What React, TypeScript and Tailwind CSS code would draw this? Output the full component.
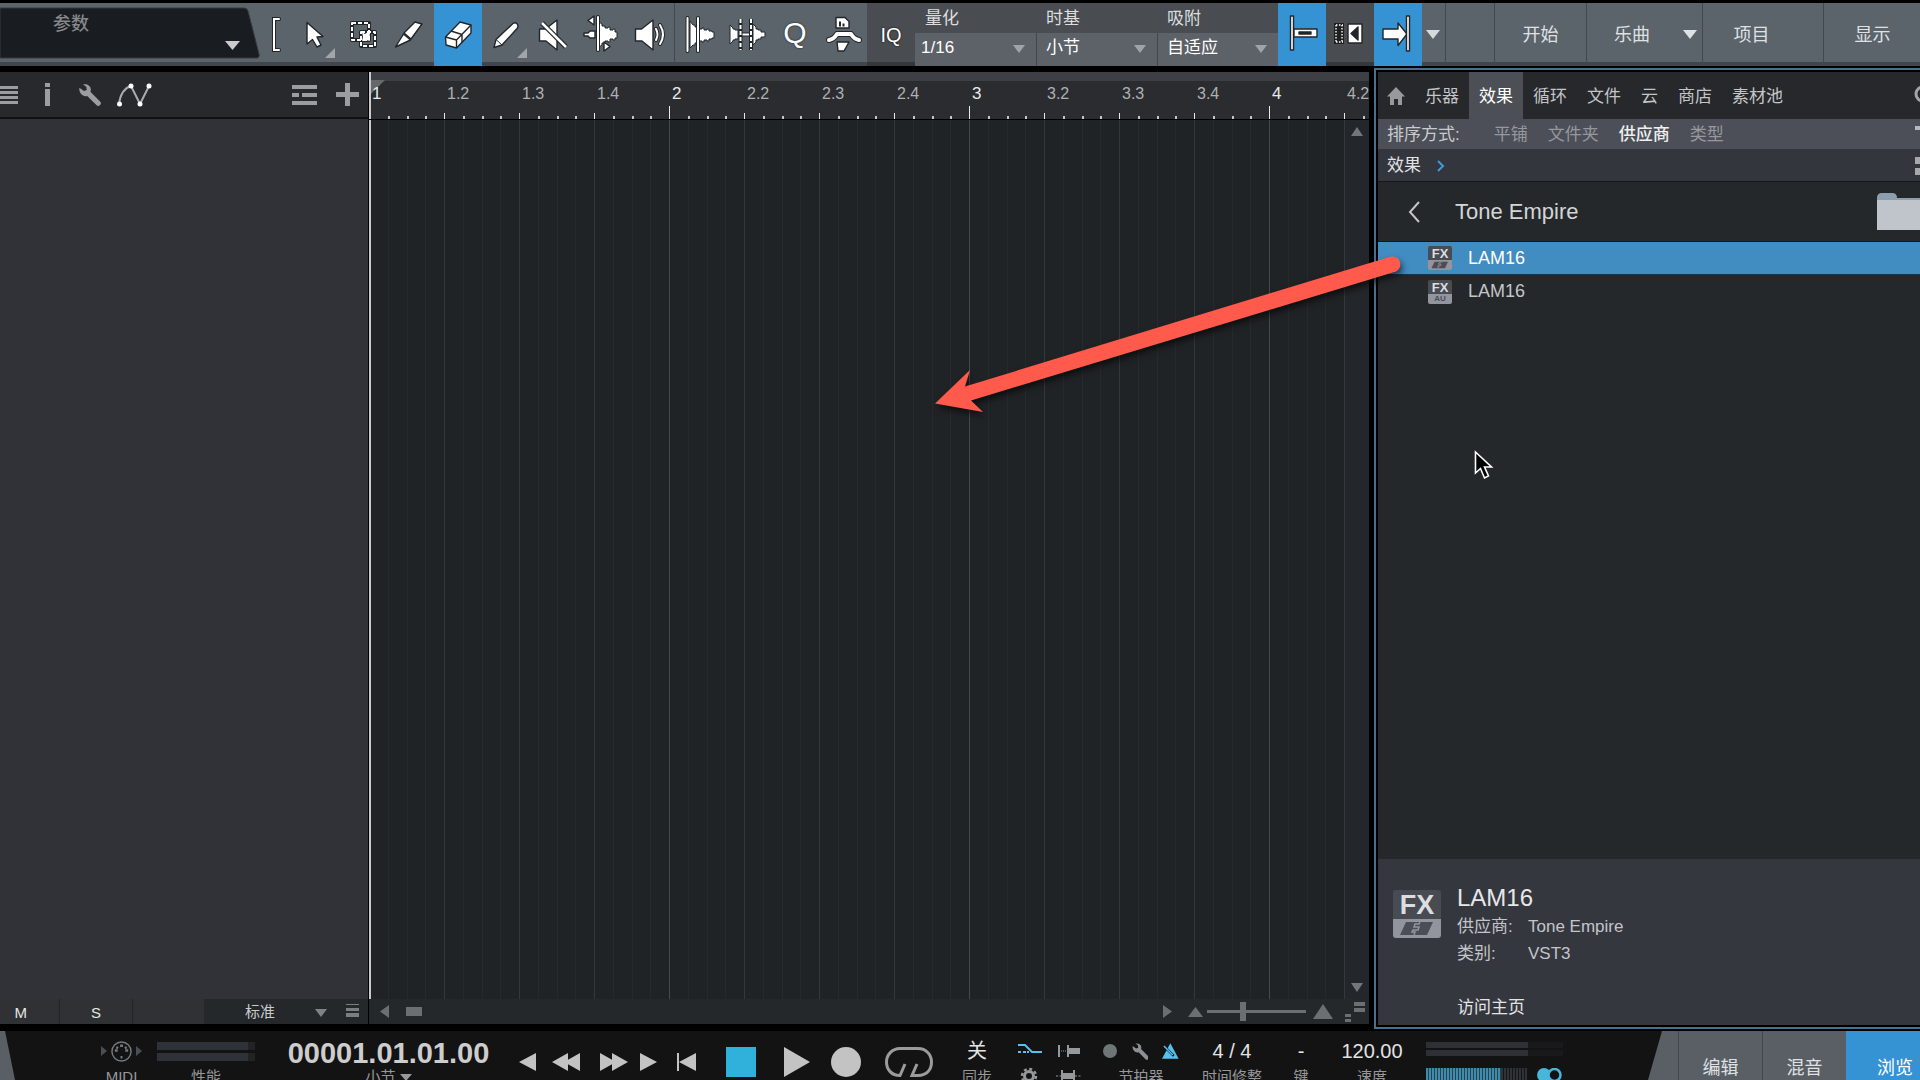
import { clsx } from "clsx";
import type { ReactNode } from "react";

const BARS = [1, 2, 3, 4];
const TICKS = Array.from({ length: 16 }, (_, i) => i);

/* ---------- small shapes ---------- */

function Triangle({
	dir,
	className,
}: {
	dir: "up" | "down" | "left" | "right";
	className?: string;
}) {
	const points = {
		up: "0,10 5,0 10,10",
		down: "0,0 10,0 5,10",
		left: "10,0 10,10 0,5",
		right: "0,0 10,5 0,10",
	}[dir];
	return (
		<svg
			viewBox="0 0 10 10"
			preserveAspectRatio="none"
			className={clsx("shrink-0 fill-current", className)}
			aria-hidden="true"
		>
			<polygon points={points} />
		</svg>
	);
}

function Wrench({ className }: { className?: string }) {
	return (
		<svg viewBox="0 0 24 24" className={className} aria-hidden="true">
			<path
				d="M1 4l5 3.500 3-1L8.500 3 5 .500C10-.500 15 3 13 8.500L23.500 19a2.600 2.600 0 0 1-4 4L9.500 13C5 14.500 0 10 1 4z"
				fill="currentColor"
			/>
		</svg>
	);
}

function FxBadge({ kind, large }: { kind: "vst" | "au"; large?: boolean }) {
	return (
		<span
			className={clsx(
				"flex shrink-0 flex-col overflow-hidden text-center font-bold",
				large ? "h-12 w-12 rounded-[3px]" : "h-6 w-6 rounded-[2px]",
			)}
		>
			<span
				className={clsx(
					"bg-[#484b52] text-[#dcdde0]",
					large ? "h-[29px] text-[27px] leading-[30px]" : "h-[14px] text-[13px] leading-[15px]",
				)}
			>
				FX
			</span>
			<span className="flex flex-1 items-center justify-center bg-[#92959d] text-[8px] leading-[9px] text-[#4b4e56]">
				{kind === "au" ? (
					"AU"
				) : (
					<svg viewBox="0 0 48 19" className="h-full w-full" fill="none" aria-hidden="true">
						<path d="M13 3h27l-6 13H7z" fill="#4b4e56" />
						<path d="M27 3l-1 2h-4l-1 3h5l-1 3h-5l-1 2h3l-1 3" stroke="#92959d" strokeWidth="1.500" />
					</svg>
				)}
			</span>
		</span>
	);
}

/* ---------- toolbar ---------- */

function Tool({
	label,
	active,
	corner,
	children,
}: {
	label: string;
	active?: boolean;
	corner?: boolean;
	children: ReactNode;
}) {
	return (
		<button
			type="button"
			aria-label={label}
			aria-pressed={active}
			className={clsx("h-full w-12 shrink-0", active && "bg-[#3593d4]")}
		>
			<svg
				viewBox="0 0 48 63"
				className="h-full w-12"
				fill="#fff"
				stroke="#22262a"
				strokeWidth="1.4"
				strokeLinejoin="round"
			>
				{children}
				{corner && <polygon points="45,45 45,55 35,55" fill="#a2a5a9" stroke="none" />}
			</svg>
		</button>
	);
}

function OutlinedLine({ d, width = 3 }: { d: string; width?: number }) {
	return (
		<>
			<path d={d} fill="none" strokeWidth={width + 2} strokeLinecap="round" />
			<path d={d} fill="none" stroke="#fff" strokeWidth={width} strokeLinecap="round" />
		</>
	);
}

function EditTools() {
	return (
		<div className="flex shrink-0">
			<Tool label="箭头工具" corner>
				<path d="M17 19.500V41l5.500-4.500L27 44l4-2-4-8 6-.500z" />
			</Tool>
			<Tool label="范围工具">
				<rect x="14" y="20" width="17" height="17" fill="none" strokeWidth="4" />
				<rect x="23" y="29" width="14" height="14" fill="none" strokeWidth="4" />
				<rect x="14" y="20" width="17" height="17" fill="none" stroke="#fff" strokeWidth="2" strokeDasharray="4 2" />
				<rect x="23" y="29" width="14" height="14" fill="none" stroke="#fff" strokeWidth="2" strokeDasharray="4 2" />
				<path d="M24 29l3 2 3-2 2 3-1 2 1 4-4-1-4 1 1-4z" stroke="none" />
			</Tool>
			<Tool label="分割工具">
				<path d="M9.500 44l8-13 7 6z" />
				<path d="M18 30l11-11 7 2-11 15z" />
			</Tool>
			<Tool label="橡皮擦工具" active>
				<path d="M11.500 34L26 19l11 3v8L22.500 45 12 42z" />
				<path d="M11.500 34l11 3L37 22M22.500 37v8M17 28l11 3.500v8" fill="none" />
			</Tool>
			<Tool label="绘画工具" corner>
				<path d="M12 44.500l2-8L31 20.500c3-2 6 1 4.500 4.500L20 42z" />
				<path d="M14 36.500l6 5.500" fill="none" strokeWidth="1" />
			</Tool>
			<Tool label="静音工具">
				<path d="M9.500 26h6L27 17v30l-11-9H9.500z" />
				<path d="M12 20l24 24" strokeWidth="5" />
				<path d="M12 20l24 24" stroke="#fff" strokeWidth="2.500" />
			</Tool>
			<Tool label="折弯工具">
				<path d="M6 30h4l2-2h5v7h-5l-2-2H6z" />
				<path d="M21 19l3 2v2h3v2h3v-1h2v3h3v-1h2v3h2v6h-2v2h-2v-1h-3v3h-2v-1h-3v2h-3v2l-3 2z" strokeWidth="1" />
				<path d="M16 13v9l-6-4.500zM26 39v9l6-4.500z" />
				<OutlinedLine d="M20 14v33" width={2} />
			</Tool>
			<Tool label="试听工具">
				<path d="M9.500 26h6L27 17v30l-11-9H9.500z" />
				<OutlinedLine d="M30 26q3 5.500 0 11M34 22q6 9.500 0 19" width={2} />
			</Tool>
		</div>
	);
}

function AudioTools() {
	return (
		<div className="flex shrink-0 border-l border-[#43484e]">
			<Tool label="瞬态检测">
				<path
					d="M15 18l3 4h2v2h4v2h3v-1h2v2h3v-1h2v2h3v1h2v6h-2v1h-3v2h-2v-1h-3v2h-2v-1h-3v2h-4v2h-2l-3 3z"
					strokeWidth="1"
				/>
				<OutlinedLine d="M12.500 15v33M23 15v33" width={2} />
			</Tool>
			<Tool label="去除静音">
				<path d="M7 22l3 3v1h2v1h3v9h-3v1h-2v1l-3 3zM30 21l3 3v2h2v1h3v2h4v5h-4v2h-3v1h-2v2l-3 3z" strokeWidth="1" />
				<path d="M17 31.500h11" strokeWidth="4" />
				<path d="M17 31.500h11" stroke="#fff" strokeWidth="2" />
				<path d="M17.500 16v31M28 16v31" strokeWidth="4" />
				<path d="M17.500 16v31M28 16v31" stroke="#fff" strokeWidth="2" strokeDasharray="4 2" />
			</Tool>
			<button
				type="button"
				aria-label="量化"
				className="w-12 shrink-0 pb-1 text-[30px] text-white [text-shadow:0_0_2px_#111]"
			>
				Q
			</button>
			<Tool label="应用">
				<path d="M17 14.500h9l4 4V25H17z" />
				<path d="M21 23.500v-5M24.500 23.500v-3" strokeWidth="2" />
				<OutlinedLine d="M10 37q5-1 8-6h14q3 5 8 6" width={4} />
				<path d="M18 39h12l-5 9h-6z" />
			</Tool>
		</div>
	);
}

function ToolbarSelect({
	id,
	label,
	value,
	divider,
}: {
	id: string;
	label: string;
	value: string;
	divider?: boolean;
}) {
	return (
		<div className="flex w-[121px] shrink-0 flex-col text-[17px] leading-5 text-[#dcdee0]">
			<label htmlFor={id} className="flex h-[30px] items-center pt-[2px] pl-[10px]">
				{label}
			</label>
			<div className={clsx("relative flex-1 bg-[#5d6269]", divider && "border-l border-[#43474c]")}>
				<select
					id={id}
					className={clsx(
						"h-[30px] w-full appearance-none bg-transparent text-white outline-none",
						divider ? "pl-[9px]" : "pl-[6px]",
					)}
				>
					<option>{value}</option>
				</select>
				<Triangle dir="down" className="pointer-events-none absolute right-[11px] top-3 h-2 w-3 text-[#a0a3a7]" />
			</div>
		</div>
	);
}

function Toolbar() {
	return (
		<header className="flex h-[63px] shrink-0 bg-[#5c646b] shadow-[inset_0_-4px_0_#40464c]">
			<button
				type="button"
				className="relative h-[56px] w-[260px] shrink-0 text-left text-[18px] font-medium text-[#86888b]"
			>
				<svg
					viewBox="0 0 260 56"
					preserveAspectRatio="none"
					className="absolute inset-0 h-full w-full"
					aria-hidden="true"
				>
					<path d="M0 5h244q3 0 4 3l11 43q1 4-3 4H0z" fill="#191c21" stroke="#363b40" />
				</svg>
				<span className="absolute left-[53px] top-2">参数</span>
				<Triangle dir="down" className="absolute bottom-[9px] right-5 h-[9px] w-[15px] text-[#c9cbcd]" />
			</button>
			<svg viewBox="0 0 30 63" className="w-[30px] shrink-0" stroke="#22262a" aria-hidden="true">
				<OutlinedLine d="M19 16h-5v31h5" width={2} />
			</svg>
			<EditTools />
			<AudioTools />
			<div className="flex shrink-0 bg-[#494d51] shadow-[inset_0_-4px_0_#34383b]">
				<button type="button" className="w-12 text-[20px] font-medium text-white [text-shadow:0_0_2px_#000]">
					IQ
				</button>
				<ToolbarSelect id="quantize" label="量化" value="1/16" />
				<ToolbarSelect id="timebase" label="时基" value="小节" divider />
				<ToolbarSelect id="snap" label="吸附" value="自适应" divider />
				<Tool label="吸附开关" active>
					<path d="M12.500 13h3v34h-3z" />
					<path d="M16 26h23v8H16z" />
					<path d="M21 29h12v2H21z" fill="#22262a" />
				</Tool>
				<Tool label="自动滚动">
					<path d="M8 20h10v21H8z" fill="#1d1f21" stroke="none" />
					<path d="M10 22h7M10 39h7M10 22v18M16 22v18" stroke="#fff" strokeDasharray="1.500 1.500" />
					<path d="M22 21h14v19H22z" />
					<path d="M32 24v13l-7-6.500z" fill="#22262a" />
				</Tool>
				<Tool label="返回起点" active>
					<path d="M9 26h15v-6l9 11-9 11.500V36H9z" />
					<path d="M32.500 13h3v35h-3z" />
				</Tool>
			</div>
			<button
				type="button"
				aria-label="更多"
				className="flex w-6 shrink-0 items-center border-r border-[#43484e] pl-1 text-[#d7d9db]"
			>
				<Triangle dir="down" className="h-[9px] w-[14px]" />
			</button>
			<nav className="flex shrink-0 text-[18px] text-[#dfe1e3]">
				<span className="w-[49px] border-r border-[#43484e]" />
				<button type="button" className="w-[92px] border-r border-[#43484e] pt-[2px]">
					开始
				</button>
				<button type="button" className="w-[90px] pt-[2px]">
					乐曲
				</button>
				<button
					type="button"
					aria-label="乐曲列表"
					className="flex w-[26px] items-center justify-center border-r border-[#43484e]"
				>
					<Triangle dir="down" className="h-[9px] w-[14px]" />
				</button>
				<button type="button" className="w-[97px] pt-[2px]">
					项目
				</button>
				<span className="w-6 border-r border-[#43484e]" />
				<button type="button" className="w-[97px] pt-[2px]">
					显示
				</button>
			</nav>
		</header>
	);
}

/* ---------- track list ---------- */

function TrackList() {
	return (
		<section className="flex w-[369px] shrink-0 flex-col border-r border-black bg-[#303237]">
			<div className="flex h-[47px] shrink-0 items-center border-b-2 border-[#101113] bg-[#27292c] text-[#9b9d9f]">
				<button type="button" aria-label="轨道列表" className="flex w-[18px] flex-col gap-[2px]">
					<span className="h-[3px] bg-current" />
					<span className="h-[3px] bg-current" />
					<span className="h-[3px] bg-current" />
					<span className="h-[3px] bg-current" />
				</button>
				<button type="button" aria-label="检查器" className="ml-[27px] flex w-[5px] flex-col gap-[2px]">
					<span className="h-1 bg-current" />
					<span className="h-[17px] bg-current" />
				</button>
				<button type="button" aria-label="设置" className="ml-7">
					<Wrench className="h-[22px] w-[23px]" />
				</button>
				<button type="button" aria-label="自动化" className="ml-4">
					<svg viewBox="0 0 36 24" className="h-6 w-9">
						<path
							d="M2 21Q4 6 14 3M14 3l9 18L32 3"
							fill="none"
							stroke="#a9abad"
							strokeWidth="2"
						/>
						<g fill="#fff">
							<circle cx="2.500" cy="21" r="2.500" />
							<circle cx="14" cy="3" r="2.500" />
							<circle cx="23" cy="21" r="2.500" />
							<circle cx="32" cy="3" r="2.500" />
						</g>
					</svg>
				</button>
				<button type="button" aria-label="展开层" className="ml-auto">
					<svg viewBox="0 0 25 20" className="h-5 w-[25px] fill-current">
						<path d="M0 0h25v4H0zM0 8h7v4H0zM10 8h15v4H10zM0 16h25v4H0z" />
					</svg>
				</button>
				<button type="button" aria-label="添加轨道" className="ml-[19px] mr-[9px]">
					<svg viewBox="0 0 23 23" className="h-[23px] w-[23px] fill-current">
						<path d="M9 0h5v9h9v5h-9v9H9v-9H0V9h9z" />
					</svg>
				</button>
			</div>
			<div className="flex-1" />
			<div className="flex h-[25px] shrink-0 bg-[#25282b] text-[15px] leading-[26px] text-[#e4e5e6]">
				<button type="button" className="w-[60px] border-r border-[#232426] bg-[#303134] pt-[1px] pr-8 text-right">
					M
				</button>
				<button type="button" className="w-[73px] border-r border-[#232426] bg-[#303134] pt-[1px]">
					S
				</button>
				<span className="w-[71px] bg-[#303134]" />
				<div className="relative flex-1">
					<select
						aria-label="轨道高度"
						className="h-[26px] w-[130px] appearance-none bg-transparent pl-[41px] text-[#c9cbcd] outline-none"
					>
						<option>标准</option>
					</select>
					<Triangle dir="down" className="pointer-events-none absolute left-[111px] top-[10px] h-2 w-3 text-[#808386]" />
				</div>
				<svg viewBox="0 0 13 14" className="mr-[9px] mt-[5px] h-[14px] w-[13px] fill-[#7b7e81]" aria-hidden="true">
					<path d="M0 0h13v1H0zM0 4h13v3H0zM0 9h13v4H0z" />
				</svg>
			</div>
		</section>
	);
}

/* ---------- arranger ---------- */

function RulerBar({ bar }: { bar: number }) {
	// the last bar runs out of view after its second beat
	const visible = bar === BARS.length ? 6 : 16;
	return (
		<div className="grid h-full w-[300px] shrink-0 grid-cols-16 items-end">
			{TICKS.slice(0, visible).map((i) => (
				<div
					key={i}
					className={clsx(
						"relative",
						i % 4 === 0 ? "border-l border-[#e8e9ea]" : "border-l-2 border-[#c4c5c6]",
						i === 0 ? "h-[13px]" : i % 4 === 0 ? "h-[6px]" : "h-[3px]",
					)}
				>
					{i % 4 === 0 && (
						<span
							className={clsx(
								"absolute bottom-[15px] left-[2px] leading-5",
								i === 0 ? "text-[17px] text-[#e8e9ea]" : "text-[16px] text-[#aeb0b2]",
								i === 0 ? "mb-[-13px]" : i % 4 === 0 ? "mb-[-6px]" : "",
								i === 0 ? "pb-[13px]" : "pb-[6px]",
							)}
						>
							{i === 0 ? bar : `${bar}.${i / 4 + 1}`}
						</span>
					)}
				</div>
			))}
		</div>
	);
}

function GridBar() {
	return (
		<div className="grid h-full w-[300px] shrink-0 grid-cols-16">
			{TICKS.map((i) => (
				<div
					key={i}
					className={clsx(
						"border-l",
						i === 0 ? "border-[#45484c]" : i % 4 === 0 ? "border-[#34373b]" : "border-[#272a2d]",
					)}
				/>
			))}
		</div>
	);
}

function Arranger() {
	return (
		<section className="relative flex min-w-0 flex-1 flex-col bg-[#202326]">
			<div className="relative h-12 shrink-0 overflow-hidden border-b border-black bg-[#2b2c30]">
				<div className="h-[9px] bg-[#3d3f44]" />
				<svg viewBox="0 0 14 14" className="absolute left-[2px] top-2 h-[14px] w-[14px]" aria-hidden="true">
					<polygon points="0,0 14,0 0,14" fill="#66686c" />
				</svg>
				<div className="absolute inset-0 flex">
					{BARS.map((bar) => (
						<RulerBar key={bar} bar={bar} />
					))}
				</div>
				<span className="absolute inset-y-0 left-0 w-[2px] bg-[#c8c9ca]" />
			</div>
			<div className="flex min-h-0 flex-1">
				<div className="flex min-w-0 flex-1 overflow-hidden border-l-2 border-[#c8c9ca]">
					<div className="-ml-[2px] flex">
						{BARS.map((bar) => (
							<GridBar key={bar} />
						))}
					</div>
				</div>
				<div className="flex w-6 flex-col items-center justify-between bg-[#23262a] py-[7px] text-[#74777a]">
					<Triangle dir="up" className="h-[9px] w-3" />
					<Triangle dir="down" className="h-[9px] w-3" />
				</div>
			</div>
			<div className="flex h-[25px] shrink-0 items-center bg-[#25282b] text-[#6c6f72]">
				<Triangle dir="left" className="ml-[11px] h-[13px] w-[9px]" />
				<span className="ml-[17px] h-[9px] w-4 bg-current" />
				<Triangle dir="right" className="ml-auto h-[13px] w-[9px]" />
				<Triangle dir="up" className="ml-4 h-[10px] w-[15px]" />
				<input
					type="range"
					aria-label="水平缩放"
					defaultValue={35}
					className="ml-1 mr-[7px] h-5 w-[99px] appearance-none bg-transparent [&::-webkit-slider-runnable-track]:h-[3px] [&::-webkit-slider-runnable-track]:bg-[#6c6f72] [&::-webkit-slider-thumb]:-mt-2 [&::-webkit-slider-thumb]:h-[19px] [&::-webkit-slider-thumb]:w-[6px] [&::-webkit-slider-thumb]:appearance-none [&::-webkit-slider-thumb]:bg-[#6c6f72]"
				/>
				<Triangle dir="up" className="h-[15px] w-5" />
				<svg viewBox="0 0 20 20" className="ml-3 mr-1 h-5 w-5 fill-current" aria-hidden="true">
					<path d="M9 0h11v4H9zM9 6h11v4H9zM0 12h6v3H0zM0 17h6v3H0z" />
				</svg>
			</div>
		</section>
	);
}

/* ---------- browser ---------- */

const TABS = ["乐器", "效果", "循环", "文件", "云", "商店", "素材池"];
const SORTS = ["平铺", "文件夹", "供应商", "类型"];

function BrowserPanel() {
	return (
		<aside className="flex w-[551px] shrink-0 flex-col border-l-[5px] border-black">
			<div className="-mt-1 mb-[-5px] flex min-h-0 flex-1 flex-col border-2 border-r-0 border-[#47718c] bg-black py-[2px] pl-[2px]">
				<nav className="flex h-[47px] shrink-0 items-stretch bg-[#26282b] text-[17px] text-[#c3c5c7]">
					<button type="button" aria-label="主页" className="ml-[9px] mr-[10px]">
						<svg viewBox="0 0 18 18" className="h-[18px] w-[18px] fill-[#97999b]">
							<path d="M9 0l9 9.500h-3V18h-4v-6H7v6H3V9.500H0z" />
						</svg>
					</button>
					{TABS.map((tab) => (
						<button
							key={tab}
							type="button"
							className={clsx("px-[10px] pt-[2px]", tab === "效果" && "bg-[#4c4f56] text-white")}
						>
							{tab}
						</button>
					))}
					<button type="button" aria-label="搜索" className="-mr-4 ml-auto">
						<svg viewBox="0 0 22 22" className="h-[22px] w-[22px]" fill="none" stroke="#a2a4a6" strokeWidth="3">
							<circle cx="9" cy="9" r="7" />
							<path d="M14 14l7 7" />
						</svg>
					</button>
				</nav>
				<div className="flex h-[30px] shrink-0 items-center gap-5 overflow-hidden bg-[#4c4f57] pt-[1px] pl-[9px] text-[17px] leading-5 text-[#96989d]">
					<span className="mr-[14px] text-[#c9cbce]">排序方式:</span>
					{SORTS.map((sort) => (
						<button
							key={sort}
							type="button"
							className={clsx(sort === "供应商" && "font-medium text-[#eeeff0]")}
						>
							{sort}
						</button>
					))}
					<span className="ml-auto mt-[6px] h-1 w-[5px] self-start bg-[#b5b7ba]" />
				</div>
				<div className="flex h-8 shrink-0 items-center gap-4 bg-[#34363d] pt-[1px] pl-[9px] text-[17px] text-[#e2e3e5]">
					<button type="button">效果</button>
					<svg viewBox="0 0 8 12" className="h-3 w-2" fill="none" stroke="#3d9bd8" strokeWidth="2" aria-hidden="true">
						<path d="M1 1l5 5-5 5" />
					</svg>
					<span className="ml-auto flex w-[5px] flex-col gap-1">
						<span className="h-[7px] bg-[#a6a8ab]" />
						<span className="h-[7px] bg-[#a6a8ab]" />
					</span>
				</div>
				<div className="flex h-[61px] shrink-0 items-center border-y border-[#15171a] bg-[#25282b]">
					<button type="button" aria-label="返回" className="ml-[30px]">
						<svg viewBox="0 0 12 22" className="h-[22px] w-3" fill="none" stroke="#c3c5c7" strokeWidth="2">
							<path d="M11 1L2 11l9 10" />
						</svg>
					</button>
					<h2 className="ml-[35px] text-[22px] font-light text-[#d3d5d7]">Tone Empire</h2>
					<svg viewBox="0 0 43 37" className="ml-auto h-[37px] w-[43px]" aria-hidden="true">
						<path d="M0 5q0-5 5-5h10q5 0 5 5h23v8H0z" fill="#8f9eae" />
						<path d="M0 7h43v30H0z" fill="#bfc5ca" />
					</svg>
				</div>
				<ul className="min-h-0 flex-1 bg-[#25282b] text-[18px] text-[#c3c5c7]">
					<li className="flex h-[33px] items-center gap-4 border-b border-[#1a3345] bg-[#418cc0] pl-[50px] text-white">
						<FxBadge kind="vst" />
						LAM16
					</li>
					<li className="flex h-[33px] items-center gap-4 pl-[50px]">
						<FxBadge kind="au" />
						LAM16
					</li>
				</ul>
				<div className="flex h-[166px] shrink-0 gap-4 bg-[#35373f] pl-[15px] pt-[31px] text-[17px] text-[#c3c5c9]">
					<FxBadge kind="vst" large />
					<div className="-mt-2">
						<h3 className="text-[24px] leading-[31px] font-light text-[#e6e7e9]">LAM16</h3>
						<dl className="grid grid-cols-[71px_auto] leading-[27px]">
							<dt>供应商:</dt>
							<dd>Tone Empire</dd>
							<dt>类别:</dt>
							<dd>VST3</dd>
						</dl>
						<a href="#home" className="mt-[27px] block leading-[27px] text-[#e2e3e5]">
							访问主页
						</a>
					</div>
				</div>
			</div>
		</aside>
	);
}

/* ---------- transport ---------- */

function Readout({
	value,
	label,
	className,
	children,
}: {
	value?: string;
	label: string;
	className?: string;
	children?: ReactNode;
}) {
	return (
		<div className={clsx("flex shrink-0 flex-col items-center", className)}>
			<div className="flex h-10 w-full shrink-0 items-center justify-center text-[20px] whitespace-nowrap text-[#e2e3e4]">
				{value ?? children}
			</div>
			<span className="-mt-1 shrink-0 text-[15px] leading-5 whitespace-nowrap text-[#96989a]">{label}</span>
		</div>
	);
}

function TransportButtons() {
	return (
		<div className="flex h-[48px] shrink-0 items-center pt-[14px] text-[#c3c3c3]">
			<button type="button" aria-label="上一标记" className="w-[17px]">
				<Triangle dir="left" className="h-[18px] w-[17px]" />
			</button>
			<button type="button" aria-label="快退" className="ml-4 flex">
				<Triangle dir="left" className="h-[18px] w-4" />
				<Triangle dir="left" className="-ml-1 h-[18px] w-4" />
			</button>
			<button type="button" aria-label="快进" className="ml-5 flex">
				<Triangle dir="right" className="h-[18px] w-4" />
				<Triangle dir="right" className="-ml-1 h-[18px] w-4" />
			</button>
			<button type="button" aria-label="下一标记" className="ml-3">
				<Triangle dir="right" className="h-[18px] w-[17px]" />
			</button>
			<button type="button" aria-label="归零" className="ml-5 flex">
				<span className="h-[18px] w-[2px] bg-current" />
				<Triangle dir="left" className="h-[18px] w-[17px]" />
			</button>
			<button type="button" aria-label="停止" className="ml-[30px] h-[30px] w-[30px] bg-[#30b1dc]" />
			<button type="button" aria-label="播放" className="ml-7">
				<Triangle dir="right" className="h-[30px] w-[26px]" />
			</button>
			<button type="button" aria-label="录音" className="ml-[21px] h-[30px] w-[30px] rounded-full bg-current" />
			<button type="button" aria-label="循环" className="ml-6">
				<svg viewBox="0 0 48 30" className="h-[30px] w-12" fill="none" stroke="#9b9b9b" strokeWidth="3">
					<path d="M20 17l-5 11.500C6 28.500 1.500 22 1.500 15S7 1.500 15 1.500h18c8 0 13.500 6 13.500 13.500S42 28.500 33 28.500h-6L32 17" />
				</svg>
			</button>
		</div>
	);
}

function Transport() {
	return (
		<footer className="flex h-[49px] shrink-0 overflow-hidden bg-[#131314]">
			<svg viewBox="0 0 16 49" className="h-[49px] w-4 shrink-0" aria-hidden="true">
				<polygon points="0,0 5,0 15,49 0,49" fill="#5a5f65" />
			</svg>
			<Readout label="MIDI" className="ml-[85px] w-[41px]">
				<div className="flex items-center gap-1 text-[#4a4e55]">
					<Triangle dir="right" className="h-[10px] w-[6px]" />
					<svg viewBox="0 0 22 22" className="h-[21px] w-[21px]" fill="none" stroke="#76797c" aria-hidden="true">
						<circle cx="11" cy="11" r="10" strokeWidth="1.500" />
						<path d="M4 10h3M15 10h3M5.500 6.500l2 1M14.500 7.500l2-1M9.500 5h3M10 17h2" strokeWidth="2.500" />
					</svg>
					<Triangle dir="right" className="h-[10px] w-[6px]" />
				</div>
			</Readout>
			<Readout label="性能" className="ml-[15px] w-[98px]">
				<div className="flex w-full flex-col gap-[3px]">
					<span className="h-2 border-r-[7px] border-[#222325] bg-[#2f3138]" />
					<span className="h-2 border-r-[7px] border-[#222325] bg-[#2f3138]" />
				</div>
			</Readout>
			<div className="ml-8 flex w-[203px] shrink-0 flex-col items-center">
				<span className="h-9 shrink-0 text-[29px] leading-[44px] font-bold text-[#cdcdcd]">00001.01.01.00</span>
				<button type="button" className="flex shrink-0 items-center gap-1 text-[15px] leading-5 text-[#96989a]">
					小节
					<Triangle dir="down" className="h-[7px] w-3" />
				</button>
			</div>
			<div className="ml-[29px] flex shrink-0">
				<TransportButtons />
			</div>
			<Readout value="关" label="同步" className="ml-[27px] w-[34px]" />
			{/* precount and metronome options */}
			<svg viewBox="0 -2 66 49" className="ml-[23px] h-[49px] w-[66px] shrink-0" fill="none" aria-hidden="true">
				<path d="M1 12h7l7 7h10" stroke="#55c1ee" strokeWidth="2" />
				<path d="M1 19h3M6 19h3M10 19h2" stroke="#55c1ee" strokeWidth="2" />
				<path d="M42 12v12M51 12v12" stroke="#96989a" strokeWidth="2" />
				<path d="M44 18h6" stroke="#96989a" strokeDasharray="1 1" />
				<path d="M52 15h11v6H52z" fill="#96989a" />
				<circle cx="12" cy="43" r="4.500" stroke="#96989a" strokeWidth="3" />
				<circle cx="12" cy="43" r="7" stroke="#96989a" strokeWidth="2.500" strokeDasharray="3 2.500" />
				<path d="M45 37v11M57 37v11" stroke="#96989a" strokeWidth="2" />
				<path d="M46 40h10v6H46z" fill="#96989a" />
				<path d="M39 43h5M58 43h6" stroke="#96989a" strokeDasharray="2 1.500" />
			</svg>
			<Readout label="节拍器" className="ml-5 w-[76px]">
				<div className="flex w-full items-center text-[#8d9091]">
					<span className="h-[14px] w-[14px] rounded-full bg-[#6e7676]" />
					<Wrench className="ml-[15px] h-[17px] w-[17px]" />
					<svg viewBox="0 0 17 16" className="ml-[14px] h-4 w-[17px]" aria-hidden="true">
						<path d="M8.500 0L17 16H0z" fill="#55c1ee" />
						<path d="M2 3l10 10" stroke="#131314" strokeWidth="2.500" />
						<path d="M2 3l9 9" stroke="#55c1ee" strokeWidth="1.500" />
					</svg>
				</div>
			</Readout>
			<Readout value="4 / 4" label="时间修整" className="ml-[23px] w-[60px]" />
			<Readout value="-" label="键" className="ml-[29px] w-5" />
			<Readout value="120.00" label="速度" className="ml-[30px] w-[62px]" />
			<div className="ml-[23px] flex w-[137px] shrink-0 flex-col pt-[11px]">
				<span className="h-[6px] border-r-[35px] border-[#19191b] bg-[#2e3036]" />
				<span className="mt-[2px] h-[6px] border-r-[35px] border-[#19191b] bg-[#2e3036]" />
				<div className="mt-3 flex h-3">
					<span className="w-[75px] bg-[repeating-linear-gradient(90deg,#448aa8_0_2px,#1d4457_2px_3px)]" />
					<span className="w-[26px] bg-[repeating-linear-gradient(90deg,#303238_0_2px,#151618_2px_3px)]" />
					<svg viewBox="0 0 25 12" className="ml-[10px] h-3 w-[25px]" fill="none" aria-hidden="true">
						<circle cx="7" cy="7" r="7" fill="#48b5da" />
						<circle cx="17.500" cy="7" r="6" fill="#131314" stroke="#48b5da" strokeWidth="2.500" />
					</svg>
				</div>
			</div>
			<svg viewBox="0 0 30 49" className="ml-auto h-[49px] w-[30px] shrink-0" aria-hidden="true">
				<polygon points="14,0 30,0 30,49 0,49" fill="#5a5f65" />
			</svg>
			<nav className="-mr-6 flex shrink-0 bg-[#5a5f65] text-[18px] leading-[74px] text-[#dfe1e3]">
				<button type="button" className="h-[74px] w-[84px] border-l border-[#43474c]">
					编辑
				</button>
				<button type="button" className="h-[74px] w-[84px] border-l border-[#43474c]">
					混音
				</button>
				<button type="button" className="h-[74px] w-[98px] bg-[#3593d4] text-white">
					浏览
				</button>
			</nav>
		</footer>
	);
}

export default function App() {
	return (
		<div className="relative flex h-screen w-full flex-col overflow-hidden bg-black pt-[3px] font-['Liberation_Sans','Noto_Sans_CJK_SC',sans-serif]">
			<Toolbar />
			<main className="flex min-h-0 flex-1 pt-[6px] pb-[7px]">
				<TrackList />
				<Arranger />
				<BrowserPanel />
			</main>
			<Transport />

			{/* drag hint arrow */}
			<svg
				viewBox="0 0 480 170"
				className="pointer-events-none absolute left-[930px] top-[250px] h-[170px] w-[480px] drop-shadow-[2px_4px_3px_rgba(0,0,0,0.6)]"
				aria-hidden="true"
			>
				<path
					d="M5 153.500L40 120l-5 16.500L461 6.500a8 8 0 0 1 5 15L41 150.500l12 11.500z"
					fill="#ff5a4b"
				/>
			</svg>
			{/* mouse pointer */}
			<svg
				viewBox="0 0 20 30"
				className="pointer-events-none absolute left-[1474px] top-[450px] h-[30px] w-5"
				aria-hidden="true"
			>
				<path
					d="M1.500 2v21l5-4.500 4 9.500 4-2-4-9h7z"
					fill="#000"
					stroke="#fff"
					strokeWidth="1.600"
				/>
			</svg>
		</div>
	);
}
